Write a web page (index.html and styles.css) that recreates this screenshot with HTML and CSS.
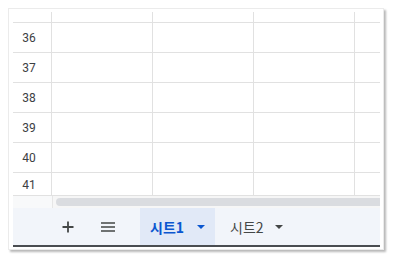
FILE: index.html
```html
<!DOCTYPE html>
<html lang="ko">
<head>
<meta charset="utf-8">
<link rel="stylesheet" href="styles.css">
</head>
<body>
<div class="frame">
  <div class="sheet">
    <div class="grid">
      <div class="rh hdr"></div><div class="c"></div><div class="c"></div><div class="c"></div><div class="c"></div>
      <div class="rh">36</div><div class="c"></div><div class="c"></div><div class="c"></div><div class="c"></div>
      <div class="rh">37</div><div class="c"></div><div class="c"></div><div class="c"></div><div class="c"></div>
      <div class="rh">38</div><div class="c"></div><div class="c"></div><div class="c"></div><div class="c"></div>
      <div class="rh">39</div><div class="c"></div><div class="c"></div><div class="c"></div><div class="c"></div>
      <div class="rh">40</div><div class="c"></div><div class="c"></div><div class="c"></div><div class="c"></div>
      <div class="rh">41</div><div class="c"></div><div class="c"></div><div class="c"></div><div class="c"></div>
    </div>
    <div class="hscroll">
      <div class="hs-corner"></div>
      <div class="hs-track"><div class="hs-thumb"></div></div>
    </div>
    <div class="tabbar">
      <button class="icon-btn" aria-label="시트 추가">
        <svg width="12" height="12" viewBox="0 0 12 12"><path d="M6 0.5v11M0.5 6h11" stroke="#444746" stroke-width="1.8" fill="none"/></svg>
      </button>
      <button class="icon-btn" aria-label="모든 시트">
        <svg width="14" height="10" viewBox="0 0 14 10"><path d="M0 1h14M0 5h14M0 9h14" stroke="#444746" stroke-width="1.6" fill="none"/></svg>
      </button>
      <div class="tab active">
        <span class="tab-name">시트1</span>
        <span class="caret"></span>
      </div>
      <div class="tab">
        <span class="tab-name">시트2</span>
        <span class="caret"></span>
      </div>
    </div>
  </div>
</div>
</body>
</html>
```
FILE: styles.css
```css
html, body {
  margin: 0;
  padding: 0;
  background: #ffffff;
}
body {
  width: 393px;
  height: 260px;
  overflow: hidden;
  font-family: Roboto, "Liberation Sans", "Noto Sans CJK KR", sans-serif;
}
.frame {
  margin: 8px 0 0 8px;
  width: 376px;
  height: 242px;
  box-sizing: border-box;
  border: 1px solid #ebebeb;
  box-shadow: 2px 2px 2px rgba(0,0,0,0.28);
  padding: 3px 0 0 4px;
}
.sheet {
  width: 367px;
  display: flex;
  flex-direction: column;
}
.grid {
  display: grid;
  grid-template-columns: 38px 100px 100px 100px 25px;
  grid-template-rows: 10px 29px 29px 29px 29px 29px 22px;
  gap: 1px;
  background: #e1e1e1;
  border-bottom: 1px solid #e1e1e1;
}
.c {
  background: #ffffff;
}
.rh {
  background: #ffffff;
  display: flex;
  align-items: center;
  justify-content: center;
  font-size: 12px;
  color: #3c4043;
  padding: 1px 6px 0 0;
}
.hscroll {
  display: flex;
  height: 12px;
  background: #f6f6f6;
}
.hs-corner {
  width: 39px;
  background: #f8f9fa;
  border-right: 1px solid #e6e6e6;
}
.hs-track {
  flex: 1;
  padding: 2px 0 2px 3px;
  box-sizing: border-box;
}
.hs-thumb {
  height: 8px;
  background: #dadce0;
  border-radius: 4px 0 0 4px;
}
.tabbar {
  height: 37px;
  background: #f2f5fa;
  border-bottom: 2px solid #4a4d51;
  display: flex;
  align-items: stretch;
  padding-left: 41px;
}
.icon-btn {
  width: 28px;
  border: 0;
  background: transparent;
  padding: 0;
  display: flex;
  align-items: center;
  justify-content: center;
  margin-right: 12px;
}
.icon-btn + .icon-btn {
  margin-right: 18px;
}
.tab {
  display: flex;
  align-items: center;
  gap: 11px;
  padding: 0 12px 0 15px;
  font-family: "Noto Sans CJK KR", sans-serif;
  font-size: 14px;
  color: #444746;
  white-space: nowrap;
}
.tab.active {
  background: #e1e9f7;
  color: #0b57d0;
  font-weight: 700;
  padding: 0 10px 0 10px;
  gap: 13px;
}
.tab-name {
  line-height: 1;
}
.caret {
  width: 0;
  height: 0;
  border-left: 4px solid transparent;
  border-right: 4px solid transparent;
  border-top: 4px solid currentColor;
}
.tab:not(.active) .caret {
  border-top-color: #444746;
}
```
